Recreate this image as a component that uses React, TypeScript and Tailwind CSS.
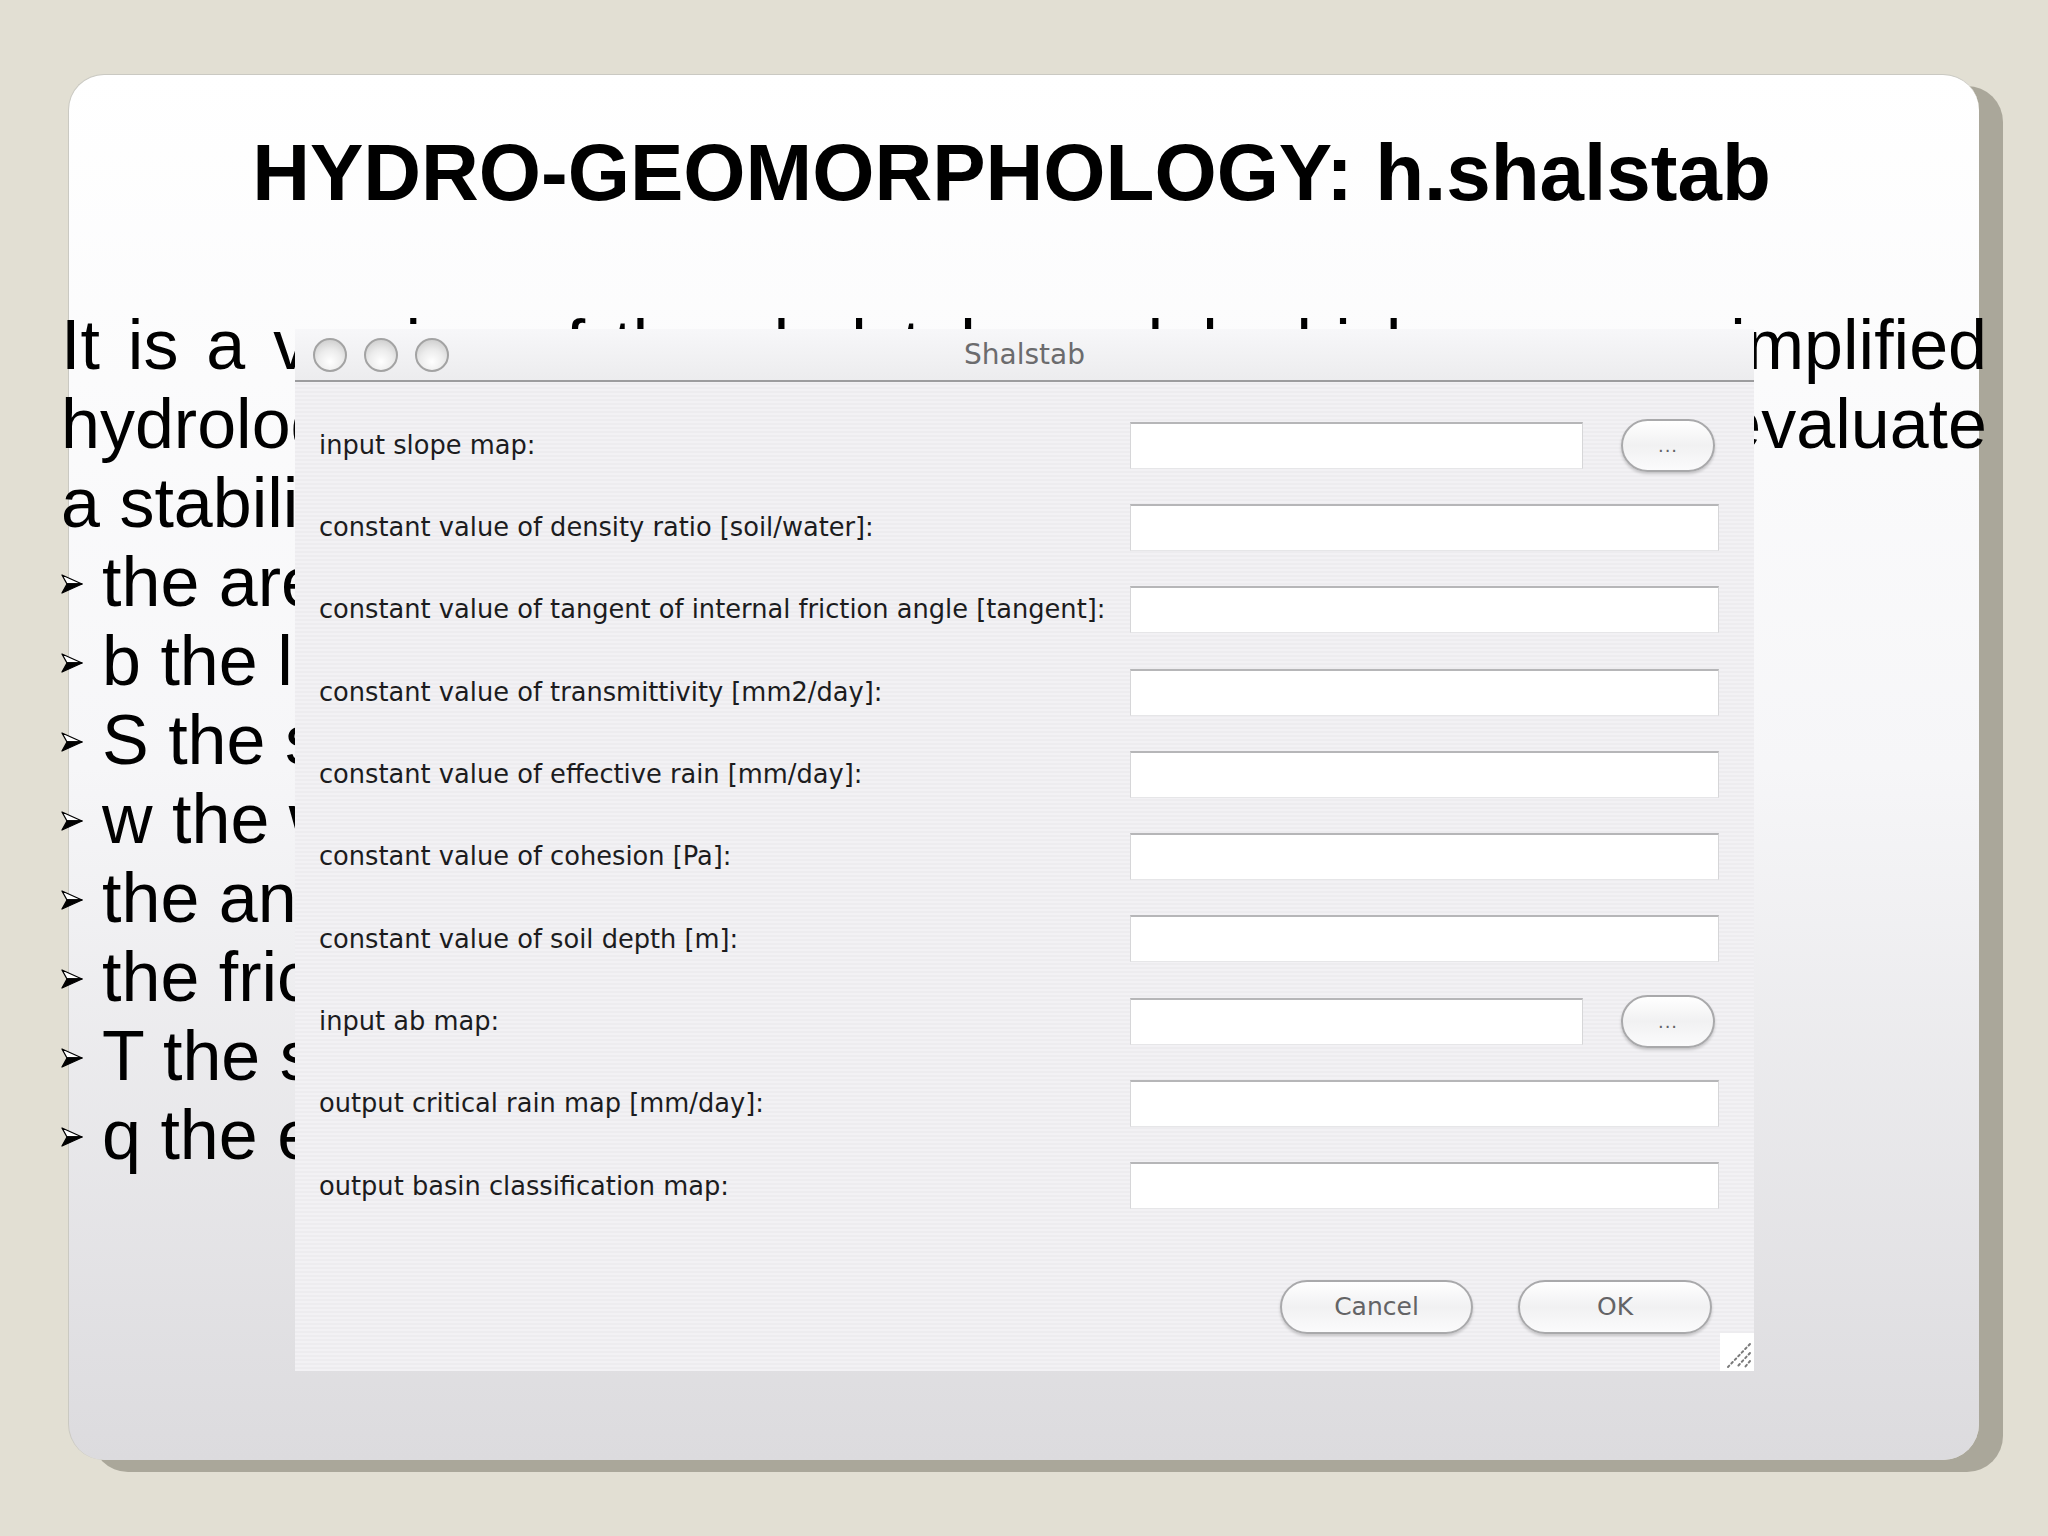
import React from "react";

const rows = [
  { label: "input slope map:", browse: true },
  { label: "constant value of density ratio [soil/water]:" },
  { label: "constant value of tangent of internal friction angle [tangent]:" },
  { label: "constant value of transmittivity [mm2/day]:" },
  { label: "constant value of effective rain [mm/day]:" },
  { label: "constant value of cohesion [Pa]:" },
  { label: "constant value of soil depth [m]:" },
  { label: "input ab map:", browse: true },
  { label: "output critical rain map [mm/day]:" },
  { label: "output basin classification map:" },
];

const bullets = [
  "the area of the upslope contributing basin",
  "b the length of the contour line",
  "S the slope of the cell",
  "w the wetness of the soil",
  "the angle of the slope",
  "the friction angle of the soil",
  "T the soil transmissivity",
  "q the effective precipitation",
];

function Arrow() {
  return (
    <svg width="22" height="20" viewBox="0 0 22 20" className="mt-[31px]">
      <polygon points="1,1 21,10 6,10" fill="#fff" stroke="#000" strokeWidth="1.3" strokeLinejoin="round" />
      <polygon points="6,10 21,10 1,19" fill="#000" stroke="#000" strokeWidth="1.3" strokeLinejoin="round" />
    </svg>
  );
}

function Light() {
  return (
    <div className="w-[34px] h-[34px] rounded-full border-2 border-[#a3a3a3] bg-[radial-gradient(circle_at_50%_72%,#ffffff_0%,#ececec_45%,#c4c4c4_100%)]" />
  );
}

function Field({ short }: { short?: boolean }) {
  return (
    <div
      className={
        (short ? "w-[453px]" : "w-[589px]") +
        " h-[47px] bg-white border-t-2 border-t-[#b6b6b8] border-x border-x-[#d6d6d8] border-b border-b-[#e6e6e8]"
      }
    />
  );
}

function PillButton({ children, className }: { children: React.ReactNode; className: string }) {
  return (
    <div
      className={
        "flex items-center justify-center rounded-full border-2 border-[#a9a9ab] bg-linear-to-b from-white via-[#f1f1f2] to-[#fbfbfc] shadow-[0_2px_3px_rgba(0,0,0,0.18)] text-[#636365] " +
        className
      }
    >
      {children}
    </div>
  );
}

function Grip() {
  return (
    <div className="absolute right-0 bottom-0 w-[34px] h-[38px] bg-white">
      <svg width="34" height="38" viewBox="0 0 34 38">
        <g stroke="#7a7a7a" strokeWidth="2" strokeDasharray="2 3" strokeLinecap="round">
          <line x1="30" y1="11" x2="8" y2="34" />
          <line x1="30" y1="20" x2="17" y2="34" />
          <line x1="30" y1="28" x2="25" y2="34" />
        </g>
      </svg>
    </div>
  );
}

export default function App() {
  return (
    <div className="relative w-[2048px] h-[1536px] overflow-hidden bg-[#e2dfd3] pt-[74px] pl-[68px] font-['Liberation_Sans',Arial,sans-serif]">
      <div className="w-[1911px] h-[1386px] rounded-[36px] border-t border-l border-[#cac9c2] bg-linear-to-b from-white via-[#f6f6f8] to-[#dcdbde] shadow-[24px_12px_0_0_#aaa79a] pt-[58px]">
        <h1 className="pr-[25px] text-center text-[80px] leading-[80px] font-bold text-black">
          HYDRO-GEOMORPHOLOGY: h.shalstab
        </h1>

        <div className="mt-[93px] -ml-[8px] w-[1926px] text-[70px] leading-[79px] text-black">
          <div className="text-justify [text-align-last:justify]">
            It is a version of the shalstab model which uses a simplified
          </div>
          <div className="text-justify [text-align-last:justify]">
            hydrological model and the infinite slope model to evaluate
          </div>
          <div className="whitespace-nowrap">a stability index based on the following parameters:</div>
          {bullets.map((b) => (
            <div key={b} className="flex h-[79px]">
              <div className="w-[41px] shrink-0">
                <Arrow />
              </div>
              <div className="whitespace-nowrap">{b}</div>
            </div>
          ))}
        </div>
      </div>

      {/* Shalstab dialog pasted over the slide */}
      <div className="absolute left-[295px] top-[329px] w-[1459px] h-[1042px] flex flex-col font-['DejaVu_Sans',sans-serif] bg-[repeating-linear-gradient(180deg,#f2f1f4_0px,#f2f1f4_2px,#edecef_2px,#edecef_4px)]">
        <div className="relative h-[51px] shrink-0 flex items-center pl-[18px] gap-[17px] bg-linear-to-b from-[#f7f7f9] to-[#ececee]">
          <Light />
          <Light />
          <Light />
          <div className="absolute inset-0 flex items-center justify-center text-[28px] text-[#6b6b6d]">
            Shalstab
          </div>
        </div>
        <div className="h-[2px] shrink-0 bg-[#9c9c9e]" />

        <div className="pt-[22px] pl-[24px]">
          {rows.map((r) => (
            <div key={r.label} className="flex items-center h-[82.3px]">
              <div className="w-[811px] shrink-0 text-[25.7px] text-[#1c1c1e] whitespace-nowrap">{r.label}</div>
              <Field short={r.browse} />
              {r.browse && (
                <PillButton className="ml-[38px] w-[94px] h-[53px] text-[18px] tracking-[1px]">...</PillButton>
              )}
            </div>
          ))}
        </div>

        <div className="mt-[53px] flex justify-end gap-[45px] pr-[42px]">
          <PillButton className="w-[193px] h-[54px] text-[25px]">Cancel</PillButton>
          <PillButton className="w-[194px] h-[54px] text-[25px]">OK</PillButton>
        </div>

        <Grip />
      </div>
    </div>
  );
}
